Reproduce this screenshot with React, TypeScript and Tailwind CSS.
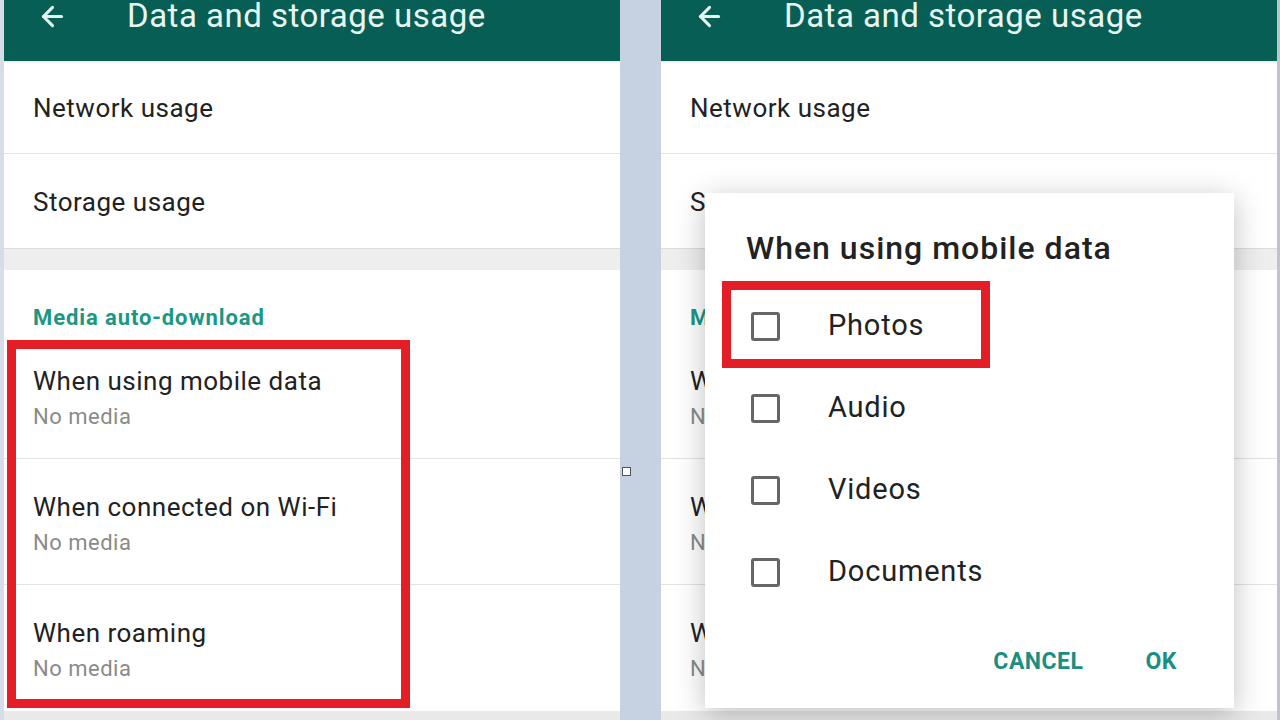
import React from "react";
import { ArrowLeft } from "lucide-react";

const font = { fontFamily: "Roboto, 'Noto Sans', sans-serif" };

function RedBox({ className }: { className: string }) {
  return <div className={"absolute border-[9px] border-[#e31e26] pointer-events-none " + className} />;
}

function Item({ title, sub, last }: { title: string; sub: string; last?: boolean }) {
  return (
    <div className={"h-[126px] px-[29px] pt-[32px] shrink-0 " + (last ? "" : "border-b border-[#e3e3e3]")}>
      <div className="text-[26px] leading-[32px] tracking-[0.5px] text-[#222]">{title}</div>
      <div className="text-[22px] leading-[30px] mt-[5px] tracking-[0.5px] text-[#8a8a8a]">{sub}</div>
    </div>
  );
}

function Screen({ children }: { children?: React.ReactNode }) {
  return (
    <div className="relative w-[616px] h-[720px] overflow-hidden bg-white flex flex-col shrink-0">
      <header className="h-[61px] bg-[#075e54] flex items-start shrink-0 shadow-sm">
        <div className="h-[32px] flex items-center pl-[33px]">
          <ArrowLeft size={31} strokeWidth={2.4} className="text-[#e4f4f0]" />
          <h1 className="ml-[59px] text-[33px] leading-[32px] tracking-[0.5px] text-[#e8f6f2]">Data and storage usage</h1>
        </div>
      </header>
      <div className="h-[93px] border-b border-[#e3e3e3] flex items-center px-[29px] pt-[2px] shrink-0">
        <span className="text-[26px] tracking-[0.5px] text-[#222]">Network usage</span>
      </div>
      <div className="h-[95px] border-b border-[#dcdcdc] flex items-center px-[29px] pt-[2px] shrink-0">
        <span className="text-[26px] tracking-[0.5px] text-[#222]">Storage usage</span>
      </div>
      <div className="h-[21px] bg-[#eeeeee] shrink-0" />
      <div className="h-[63px] px-[29px] pt-[34px] shrink-0">
        <span className="text-[22px] leading-[28px] font-bold tracking-[0.9px] text-[#1b9883]">Media auto-download</span>
      </div>
      <Item title="When using mobile data" sub="No media" />
      <Item title="When connected on Wi-Fi" sub="No media" />
      <Item title="When roaming" sub="No media" last />
      <div className="flex-1 bg-[#e9e9e9]" />
      {children}
    </div>
  );
}

function Check({ label }: { label: string }) {
  return (
    <div className="h-[82px] flex items-center pl-[46px]">
      <div className="w-[29px] h-[29px] border-[3px] border-[#666] rounded-[3px]" />
      <span className="ml-[48px] text-[29px] tracking-[0.8px] text-[#222]">{label}</span>
    </div>
  );
}

export default function App() {
  return (
    <div style={font} className="w-[1280px] h-[720px] flex bg-[#c8d2e2] overflow-hidden">
      <div className="w-[4px] shrink-0 bg-[#d7dde8]" />
      <Screen>
        <RedBox className="left-[3px] top-[340px] w-[403px] h-[368px]" />
      </Screen>
      <div className="w-[41px] shrink-0 relative bg-[#c6d1e2]">
        <div className="absolute left-[2px] top-[467px] w-[9px] h-[9px] border border-[#555] bg-white" />
      </div>
      <Screen>
        <div className="absolute left-[44px] top-[193px] w-[529px] h-[515px] bg-white shadow-[0_6px_28px_rgba(0,0,0,0.25)] flex flex-col">
          <div className="pl-[41px] pt-[35px] h-[92px] text-[32px] leading-[40px] tracking-[1px] font-medium text-[#222]">When using mobile data</div>
          <Check label="Photos" />
          <Check label="Audio" />
          <Check label="Videos" />
          <Check label="Documents" />
          <div className="flex justify-end items-center gap-[62px] pr-[57px] mt-[32px] text-[23px] tracking-[0.5px] font-bold text-[#1b8f7f]">
            <span>CANCEL</span>
            <span>OK</span>
          </div>
          <RedBox className="left-[17px] top-[88px] w-[268px] h-[87px]" />
        </div>
      </Screen>
      <div className="flex-1 bg-[#bfc4cc]" />
    </div>
  );
}
